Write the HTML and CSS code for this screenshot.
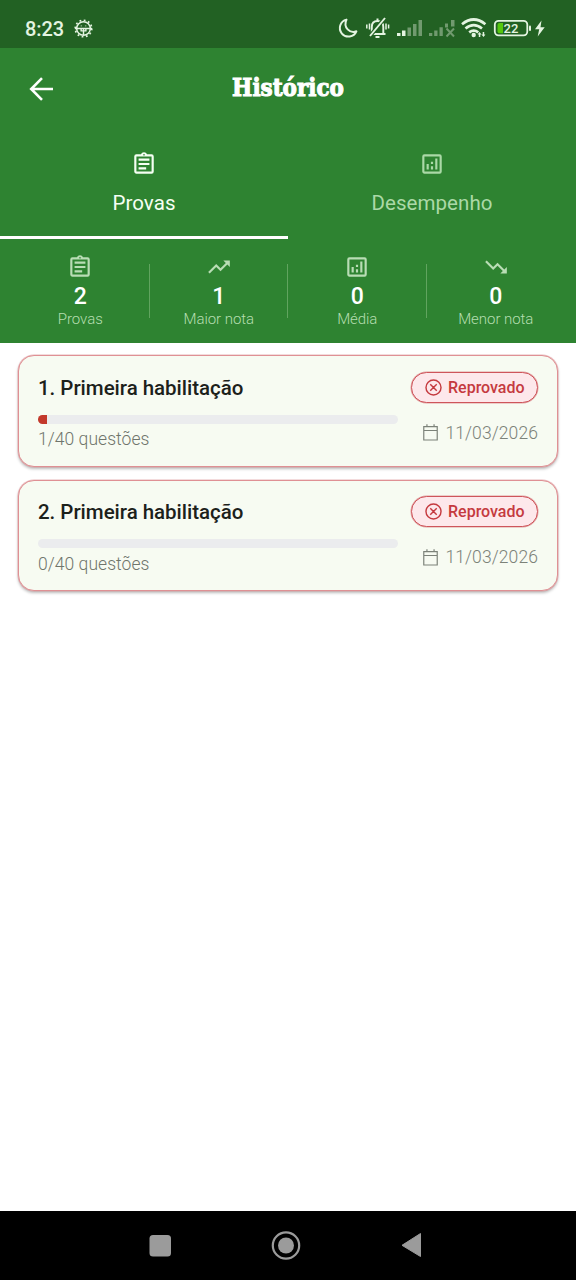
FILE: index.html
```html
<!DOCTYPE html>
<html lang="pt-BR">
<head>
<meta charset="utf-8">
<title>Histórico</title>
<link rel="stylesheet" href="styles.css">
</head>
<body>
<svg class="sprite" aria-hidden="true">
  <symbol id="clipboard" viewBox="0 0 24 24"><path fill-rule="evenodd" d="M19 3h-4.200a3 3 0 0 0-5.600 0H5a2 2 0 0 0-2 2v14c0 1.100.9 2 2 2h14a2 2 0 0 0 2-2V5a2 2 0 0 0-2-2zm-7-.2a.75.75 0 1 1 0 1.500.75.75 0 0 1 0-1.500zM19 19H5V5h14zM7 7h10v2H7zm0 4h10v2H7zm0 4h7v2H7z"/></symbol>
  <symbol id="chart" viewBox="0 0 24 24"><path fill-rule="evenodd" d="M19 3H5a2 2 0 0 0-2 2v14c0 1.100.9 2 2 2h14a2 2 0 0 0 2-2V5a2 2 0 0 0-2-2zm0 16H5V5h14zM7 12h2v5H7zm8-5h2v10h-2zm-4 7h2v3h-2zm0-4h2v2h-2z"/></symbol>
  <symbol id="up" viewBox="0 0 24 24"><path d="M16 6l2.290 2.290-4.880 4.880-4-4L2 16.590 3.410 18l6-6 4 4 6.300-6.290L22 12V6z"/></symbol>
  <symbol id="down" viewBox="0 0 24 24"><path d="M16 18l2.290-2.290-4.880-4.880-4 4L2 7.410 3.410 6l6 6 4-4 6.300 6.290L22 12v6z"/></symbol>
  <symbol id="cancel" viewBox="0 0 24 24"><path fill="none" stroke="currentColor" stroke-width="1.800" d="M21.500 12a9.500 9.500 0 1 1-19 0 9.500 9.500 0 0 1 19 0zM7.900 7.900l8.200 8.200m0-8.200l-8.200 8.200"/></symbol>
  <symbol id="calendar" viewBox="0 0 24 24"><path fill="none" stroke="currentColor" stroke-width="1.500" d="M3.500 4.500h17v17h-17zM3.500 9.500h17M7.500 1.500v3m9-3v3"/></symbol>
</svg>
<div class="screen">
  <header class="status">
    <span class="clock">8:23</span>
    <svg class="gear" viewBox="0 0 20 20"><circle cx="10" cy="10" r="8.700" fill="none" stroke="currentColor" stroke-width="1.800" stroke-dasharray="1.900 2.655"/><circle cx="10" cy="10" r="7.200" fill="none" stroke="currentColor" stroke-width="1.600"/><path fill="none" stroke="currentColor" stroke-width="1.500" d="M1 10h18M10 10v7M7.500 10.500v2h5v-2"/><path d="M7 6.500h1.500V8H7zm4.500 0H13V8h-1.500z" opacity=".6"/></svg>
    <svg class="indicators" viewBox="330 0 230 48">
      <path fill="none" stroke="currentColor" stroke-width="2" stroke-linejoin="round" d="M346.500 19.600A8.600 8.600 0 1 0 356.400 31.300C350 33.800 342.800 27.500 346.500 19.600z"/>
      <g fill="none" stroke="currentColor" stroke-width="1.900" stroke-linejoin="round"><path d="M370 34h15.500M371.800 33.500v-6.500c0-3.800 2-6 5.700-6s5.800 2.200 5.800 6v6.500M376.500 19.500h2M375.500 37h4"/><path stroke="#226123" stroke-width="4" d="M370 36l14-17"/><path d="M370 36l15-18"/><path stroke-width="1.500" d="M369.500 23.500v6M366.800 24.500v4M386 23.500v6M388.600 24.500v4"/></g>
      <path d="M397 33h3.500v3H397zm5-2.500h3.500V36H402z"/><path class="dim" d="M407.500 27.500h3.500V36h-3.500zm5.500-3.500h3.500v12H413zm5.500-4h3.500v16h-3.500z"/>
      <path class="dim" d="M429 33h3.300v3H429zm5.200-2.500h3.300V36h-3.300zm5.300-3.200h3.300V36h-3.300zm5.500-3.800h3v4h-3zm6-3.500h3.500v6.500H451z"/><path class="dim-line" d="M446.500 28.500l7.500 8m0-8l-7.500 8"/>
      <g fill="none" stroke="currentColor" stroke-width="2.700"><path d="M462 24.200q11.700-9.400 23.400 0M465.500 28.500q8.200-6.800 16.500 0M469.200 32.400q4.600-3.600 9 0"/></g><circle cx="473.700" cy="35" r="2.200"/><path d="M479.500 32l2 2.500h-1.200V37h-1.500v-2.500h-1.200zm4 5l-2-2.500h1.200V32h1.500v2.500h1.200z"/>
      <rect x="494.800" y="20.800" width="32.500" height="14.600" rx="3.800" fill="none" stroke="currentColor" stroke-width="1.800"/><path class="charge" d="M499.500 23h3.500v10.200h-3.500q-2 0-2-2V25q0-2 2-2z"/><rect x="529" y="25.500" width="2" height="5.500" rx="1"/><text x="503.500" y="32.700">22</text><path d="M541.500 20.500l-6.500 8.800h4.200l-1.500 7.200 7-9.300h-4.200z"/>
    </svg>
  </header>
  <div class="green">
    <div class="bar"><svg class="back" viewBox="0 0 24 24"><path fill="none" stroke="currentColor" stroke-width="2.600" d="M24 12H2M13 1.200L2.200 12 13 22.800"/></svg><h1>Histórico</h1></div>
    <nav class="tabs">
      <div class="tab active"><svg><use href="#clipboard"/></svg><span>Provas</span></div>
      <div class="tab"><svg><use href="#chart"/></svg><span>Desempenho</span></div>
    </nav>
    <section class="stats">
      <div class="stat"><svg><use href="#clipboard"/></svg><b>2</b><span>Provas</span></div>
      <div class="stat"><svg><use href="#up"/></svg><b>1</b><span>Maior nota</span></div>
      <div class="stat"><svg><use href="#chart"/></svg><b>0</b><span>Média</span></div>
      <div class="stat"><svg><use href="#down"/></svg><b>0</b><span>Menor nota</span></div>
    </section>
  </div>
  <main>
    <article class="card">
      <div class="info"><h2>1. Primeira habilitação</h2><div class="track"><div class="fill" style="width:2.5%"></div></div><p>1/40 questões</p></div>
      <div class="side"><div class="badge"><svg><use href="#cancel"/></svg><span>Reprovado</span></div><div class="date"><svg><use href="#calendar"/></svg><span>11/03/2026</span></div></div>
    </article>
    <article class="card">
      <div class="info"><h2>2. Primeira habilitação</h2><div class="track"></div><p>0/40 questões</p></div>
      <div class="side"><div class="badge"><svg><use href="#cancel"/></svg><span>Reprovado</span></div><div class="date"><svg><use href="#calendar"/></svg><span>11/03/2026</span></div></div>
    </article>
  </main>
  <footer>
    <svg viewBox="0 0 576 69"><rect x="149.500" y="24" width="21.500" height="21.500" rx="3.500"/><circle cx="286" cy="34.500" r="13.200" fill="none" stroke="currentColor" stroke-width="2.200"/><circle cx="286" cy="34.500" r="8"/><path d="M420.500 22.500v23L402 34.300z" stroke="currentColor" stroke-linejoin="round"/></svg>
  </footer>
</div>
</body>
</html>
```
FILE: styles.css
```css
* { box-sizing: border-box; }
body, h1, h2, p { margin: 0; }
body { font-family: Roboto, sans-serif; background: #fff; }
svg { display: block; fill: currentColor; flex: none; }
.sprite { display: none; }
.screen { width: 576px; height: 1280px; display: flex; flex-direction: column; }
.status { height: 48px; background: #226123; color: #e4f4e1; display: flex; align-items: center; padding: 0 16px 0 25px; }
.clock { font-size: 20px; font-weight: 500; line-height: 24px; width: 49px; padding-top: 9px; height: 33px; letter-spacing: -.1px; }
.gear { width: 19px; height: 19px; margin-top: 8px; }
.indicators { width: 230px; height: 48px; margin-left: auto; }
.indicators text { font: 500 13px Roboto, sans-serif; }
.dim { fill: #719a6f; }
.dim-line { fill: none; stroke: #719a6f; stroke-width: 2; }
.charge { fill: #55c70d; }
.green { background: #2e8331; color: #fff; height: 295px; flex: none; }
.bar { height: 90px; display: grid; grid-template-columns: 48px 1fr 48px; padding: 0 5px 0 29px; }
.back { width: 24px; height: 24px; margin-top: 29px; }
.bar h1 { justify-self: center; margin: 24px 0 0 -24px; font: bold 25px/32px "DejaVu Serif", serif; -webkit-text-stroke: 1.100px #fff; transform: scaleX(.86); white-space: nowrap; }
.tabs { display: grid; grid-template-columns: 1fr 1fr; height: 101px; }
.tab { display: flex; flex-direction: column; align-items: center; padding-top: 13px; border-bottom: 3px solid transparent; color: #abd9a7; }
.tab.active { color: #f5fff3; border-color: #fff; }
.tab svg { width: 26px; height: 26px; }
.tab span { margin-top: 14px; font-size: 20.500px; line-height: 25px; letter-spacing: .05px; }
.stats { display: grid; grid-template-columns: repeat(4, 1fr); padding: 15px 11px 0; }
.stat { display: flex; flex-direction: column; align-items: center; position: relative; }
.stat svg { width: 26px; height: 26px; color: #b9ddb5; }
.stat b { font-size: 23px; line-height: 26px; font-weight: 500; margin-top: 4px; }
.stat span { font-size: 15px; line-height: 18px; font-weight: 300; color: #b5deb0; letter-spacing: -.05px; }
.stat + .stat::before { content: ""; position: absolute; left: -1px; top: 10px; width: 1px; height: 54px; background: #61a45f; }
main { flex: 1; padding: 12px 18px; display: flex; flex-direction: column; gap: 13px; }
.card { height: 111.500px; display: flex; justify-content: space-between; background: #f7fbf2; border: 1px solid #df9094; border-radius: 16px; padding: 15.500px 19px; box-shadow: 0 0 0 .5px #df909499, 0 2px 3px #0004; }
.info { width: 360px; }
h2 { font-size: 20.500px; line-height: 26px; font-weight: 500; color: #1c211b; padding-top: 3px; letter-spacing: -.03px; }
.track { height: 9px; margin-top: 14px; border-radius: 5px; background: #ebecee; overflow: hidden; }
.fill { height: 100%; background: #c3392b; }
.info p { font-size: 17.500px; line-height: 22px; margin-top: 4.500px; font-weight: 300; color: #6f756c; letter-spacing: .05px; }
.side { display: flex; flex-direction: column; align-items: flex-end; }
.badge { height: 31px; width: 127px; display: flex; align-items: center; gap: 5px; padding-left: 12px; border: 1px solid #ce555b; border-radius: 16px; background: #fde8eb; color: #c53a3f; font-size: 16px; font-weight: 500; box-shadow: 0 0 0 .5px #ce555b88; }
.badge svg { width: 19px; height: 19px; }
.date { display: flex; align-items: center; gap: 5px; margin-top: 18px; color: #7c8279; font-size: 17.500px; line-height: 24px; font-weight: 300; letter-spacing: .1px; }
.date svg { width: 19px; height: 19px; }
footer { height: 69px; background: #000; color: #9b9b9b; }
footer svg { width: 576px; height: 69px; }
```
